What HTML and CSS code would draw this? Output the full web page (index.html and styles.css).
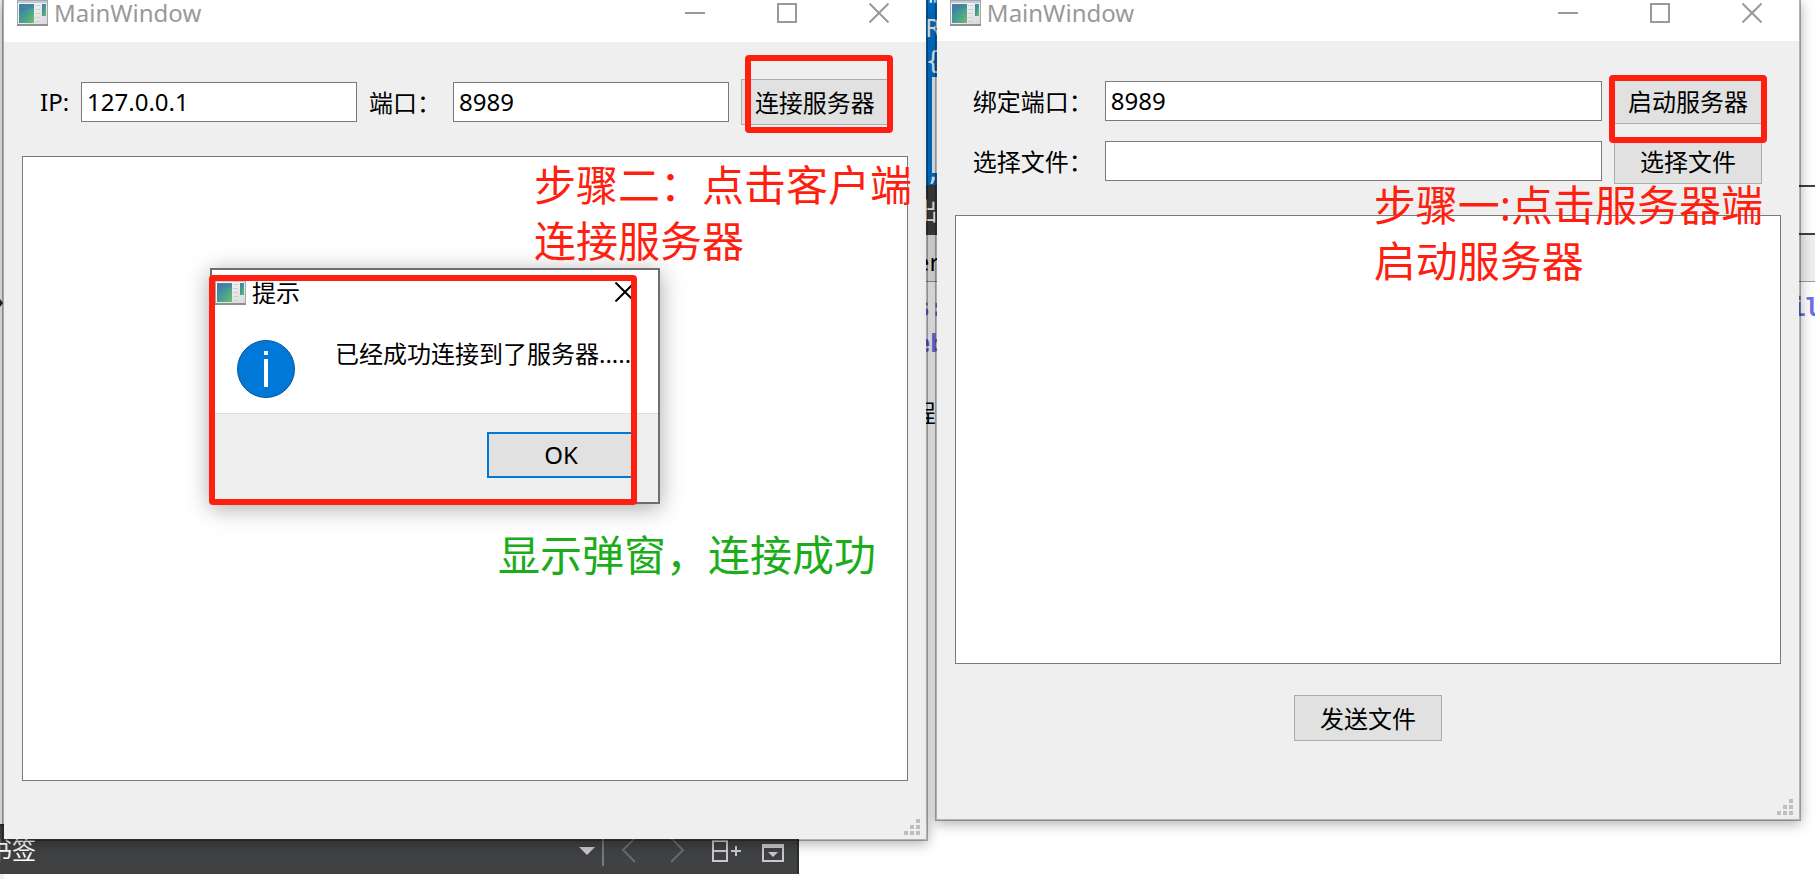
FILE: index.html
```html
<!DOCTYPE html>
<html lang="zh-CN">
<head>
  <meta charset="UTF-8">
  <title>MainWindow</title>
  <link rel="stylesheet" href="styles.css">
</head>
<body>

  <!-- 图标 -->
  <svg class="defs" aria-hidden="true">
    <defs>
      <linearGradient id="panel" x1="0" y1="0" x2="1" y2="1">
        <stop offset="0" stop-color="#3f7fae"/>
        <stop offset="0.5" stop-color="#459a94"/>
        <stop offset="1" stop-color="#6cc067"/>
      </linearGradient>
      <linearGradient id="frame" x1="0" y1="0" x2="1" y2="1">
        <stop offset="0" stop-color="#ffffff"/>
        <stop offset="1" stop-color="#d8d8da"/>
      </linearGradient>
      <symbol id="app" viewBox="0 0 31 26">
        <rect x="0.5" y="0.5" width="30" height="25" fill="url(#frame)" stroke="#a3a7ae"/>
        <path d="M1 1h29v2H1z" fill="#c5cad6"/>
        <path d="M0 25h31" stroke="#8f9094" stroke-width="2"/>
        <rect x="2" y="4" width="15" height="19" fill="url(#panel)"/>
        <path d="M2 14Q7 8 17 8V4H2z" fill="#4478a8" opacity="0.5"/>
        <path d="M18 5.5h5M18 9.5h5M18 13.5h5M18 17.5h5M18 21.5h5" stroke="#cfcfd2"/>
        <rect x="25" y="4" width="4" height="12" fill="url(#panel)"/>
      </symbol>
      <symbol id="min" viewBox="0 0 20 20"><path d="M0 10h20" stroke="currentColor" stroke-width="2"/></symbol>
      <symbol id="max" viewBox="0 0 20 20"><path d="M1 1h18v18H1z" fill="none" stroke="currentColor" stroke-width="2"/></symbol>
      <symbol id="close" viewBox="0 0 20 20"><path d="M0.5 0.5l19 19M19.5 0.5l-19 19" stroke="currentColor" stroke-width="2"/></symbol>
      <symbol id="grip" viewBox="0 0 16 16"><path d="M12 0h4v4h-4zM6 6h4v4H6zM12 6h4v4h-4zM0 12h4v4H0zM6 12h4v4H6zM12 12h4v4h-4z" fill="#bfbfbf"/></symbol>
    </defs>
  </svg>

  <div class="desktop">

    <div class="behind behind-left"><i class="arrow"></i></div>

    <!-- 客户端 -->
    <section class="window client">
      <header class="titlebar">
        <svg class="app-icon"><use href="#app"/></svg>
        <h1>MainWindow</h1>
        <button class="ctl" aria-label="最小化"><svg><use href="#min"/></svg></button>
        <button class="ctl" aria-label="最大化"><svg><use href="#max"/></svg></button>
        <button class="ctl" aria-label="关闭"><svg><use href="#close"/></svg></button>
      </header>

      <div class="body">
        <div class="row">
          <label for="ip">IP:</label>
          <input type="text" id="ip" value="127.0.0.1">
          <label for="port">端口：</label>
          <input type="text" id="port" value="8989">
          <div class="marked">
            <button class="btn">连接服务器</button>
            <span class="mark mark-connect"></span>
          </div>
        </div>
        <textarea aria-label="客户端记录"></textarea>
      </div>
      <svg class="grip"><use href="#grip"/></svg>

      <p class="note note-two">步骤二：点击客户端<br>连接服务器</p>
      <p class="note note-ok">显示弹窗，连接成功</p>

      <!-- 提示弹窗 -->
      <div class="dialog" role="dialog" aria-labelledby="tip">
        <header class="dialog-title">
          <svg class="app-icon"><use href="#app"/></svg>
          <h2 id="tip">提示</h2>
          <button class="dialog-close" aria-label="关闭"><svg><use href="#close"/></svg></button>
        </header>
        <div class="dialog-body">
          <svg class="info" viewBox="0 0 58 58">
            <circle cx="29" cy="29" r="28.5" fill="#0078d7" stroke="#0a5596"/>
            <path d="M27 11h4v4h-4zM27 19h4v28h-4z" fill="#fff"/>
          </svg>
          <p>已经成功连接到了服务器......</p>
        </div>
        <footer class="dialog-foot">
          <button class="btn btn-ok">OK</button>
        </footer>
        <span class="mark mark-dialog"></span>
      </div>
    </section>

    <div class="behind behind-mid" aria-hidden="true">
      <div class="code"><span>"</span><span>R</span><span>{</span><b></b><span>,</span></div>
      <div class="tab">出</div>
      <div class="find">er</div>
      <div class="out"><span>s:</span><span>eb</span></div>
      <div class="cjk">程</div>
    </div>

    <!-- 服务器端 -->
    <section class="window server">
      <header class="titlebar">
        <svg class="app-icon"><use href="#app"/></svg>
        <h1>MainWindow</h1>
        <button class="ctl" aria-label="最小化"><svg><use href="#min"/></svg></button>
        <button class="ctl" aria-label="最大化"><svg><use href="#max"/></svg></button>
        <button class="ctl" aria-label="关闭"><svg><use href="#close"/></svg></button>
      </header>

      <div class="body">
        <div class="row">
          <label for="bind">绑定端口：</label>
          <input type="text" id="bind" value="8989">
          <div class="marked">
            <button class="btn">启动服务器</button>
            <span class="mark mark-start"></span>
          </div>
        </div>
        <div class="row">
          <label for="file">选择文件：</label>
          <input type="text" id="file">
          <button class="btn">选择文件</button>
        </div>
        <textarea aria-label="服务器记录"></textarea>
        <button class="btn btn-send">发送文件</button>
      </div>
      <svg class="grip"><use href="#grip"/></svg>

      <p class="note note-one">步骤一:点击服务器端<br>启动服务器</p>
    </section>

    <div class="behind behind-right" aria-hidden="true">
      <div class="line"></div>
      <div class="find"></div>
      <div class="out"><span>il</span></div>
    </div>

    <!-- 底部书签栏 -->
    <div class="bookmarks">
      <span class="bm-label">书签</span>
      <svg class="bm-tools" viewBox="0 0 210 50">
        <g fill="none">
          <path d="M24 13v29" stroke="#77787a" stroke-width="2"/>
          <path d="M56 14L44 26l12 12M92 14l12 12-12 12" stroke="#6a6b6d" stroke-width="2"/>
          <path d="M134 17h14v20h-14zM134 27h14M152 27h10M157 22v10" stroke="#c8c8cc" stroke-width="2"/>
          <path d="M184 21h20v16h-20z" stroke="#c8c8cc" stroke-width="2"/>
        </g>
        <path d="M0 23h16l-8 8zM183 20h22v4h-22zM189 28h10l-5 5z" fill="#c8c8cc"/>
      </svg>
    </div>
  </div>

</body>
</html>
```

FILE: styles.css
```css
* {
  box-sizing: border-box;
}

body {
  margin: 0;
  background: #fff;
  color: #000;
  font-family: "Noto Sans", "Noto Sans CJK SC", sans-serif;
  font-size: 24px;
  overflow: hidden;
}

h1, h2, p {
  margin: 0;
  font-size: 24px;
  font-weight: 400;
}

button, input, textarea {
  font: inherit;
  color: inherit;
  border-radius: 0;
}

.defs {
  position: absolute;
  width: 0;
  height: 0;
}

.desktop {
  position: relative;
  display: flex;
  height: 100vh;
}

/* windows */
.window {
  position: relative;
  z-index: 2;
  display: flex;
  flex-direction: column;
  min-width: 0;
  background: #efefef;
  background-clip: padding-box;
  border: 2px solid rgba(0, 0, 0, 0.3);
  border-top: none;
  box-shadow: 0 3px 12px rgba(0, 0, 0, 0.3);
}

.client {
  flex: 926 1 0;
  height: calc(100vh - 38px);
}

.server {
  flex: 866 1 0;
  height: calc(100vh - 58px);
}

.titlebar {
  display: flex;
  align-items: center;
  height: 42px;
  padding: 0 1px 16px 13px;
  background: #fff;
  color: #999;
}

.server .titlebar {
  height: 41px;
}

.app-icon {
  width: 31px;
  height: 26px;
  margin-right: 6px;
}

.titlebar h1 {
  flex: 1;
  line-height: 26px;
}

.ctl {
  width: 92px;
  height: 26px;
  padding: 0;
  border: none;
  background: none;
}

.ctl svg, .dialog-close svg {
  display: block;
  width: 20px;
  height: 20px;
  margin: 0 auto;
}

/* forms */
.body {
  flex: 1;
  display: flex;
  flex-direction: column;
  padding: 37px 18px 58px;
}

.row {
  display: flex;
  align-items: center;
  gap: 12px;
  padding: 0 19px 0 18px;
}

.row + .row {
  margin-top: 14px;
}

.row label {
  padding-bottom: 2px;
  white-space: nowrap;
}

.row input {
  flex: 1;
  min-width: 0;
  height: 40px;
  padding: 0 5px 2px;
  border: 1px solid #7a7a7a;
  background: #fff;
}

textarea {
  flex: 1;
  margin-top: 31px;
  border: 1px solid #7a7a7a;
  background: #fff;
  resize: none;
}

.btn {
  width: 148px;
  height: 46px;
  padding: 0 0 2px;
  border: 1px solid #adadad;
  background: #e1e1e1;
}

.server .body {
  padding-bottom: 78px;
}

.btn-send {
  align-self: center;
  margin-top: 31px;
}

.grip {
  position: absolute;
  right: 6px;
  bottom: 4px;
  width: 16px;
  height: 16px;
}

/* red marks and notes */
.marked {
  position: relative;
  display: flex;
}

.mark {
  position: absolute;
  border: 6px solid #ff1f10;
  border-radius: 4px;
}

.mark-connect {
  left: 4px;
  top: -24px;
  width: 148px;
  height: 78px;
}

.mark-start {
  left: -5px;
  top: -3px;
  width: 158px;
  height: 68px;
}

.mark-dialog {
  left: -3px;
  top: 5px;
  width: 428px;
  height: 230px;
}

.note {
  position: absolute;
  z-index: 1;
  color: #ff1f10;
  font-size: 42px;
  line-height: 56px;
  white-space: nowrap;
}

.note-two {
  left: 530px;
  top: 157px;
}

.note-ok {
  left: 494px;
  top: 527px;
  color: #1aad19;
}

.note-one {
  left: 437px;
  top: 177px;
}

/* dialog */
.dialog {
  position: absolute;
  left: 206px;
  top: 268px;
  width: 450px;
  border: 2px solid #6e6e6e;
  background: #fff;
  box-shadow: 0 4px 22px rgba(0, 0, 0, 0.35);
}

.dialog-title {
  display: flex;
  align-items: center;
  height: 44px;
  padding: 0 23px 0 3px;
}

.dialog-title h2 {
  flex: 1;
  padding-bottom: 2px;
}

.dialog-close {
  width: 20px;
  height: 20px;
  padding: 0;
  border: none;
  background: none;
}

.dialog-body {
  display: flex;
  gap: 40px;
  height: 99px;
  padding: 26px 0 0 25px;
}

.dialog-body p {
  line-height: 28px;
  white-space: nowrap;
}

.info {
  flex: none;
  width: 58px;
  height: 58px;
}

.dialog-foot {
  display: flex;
  justify-content: flex-end;
  height: 89px;
  padding: 18px 23px 0 0;
  border-top: 1px solid #dfdfdf;
  background: #efefef;
}

.btn-ok {
  border: 2px solid #0078d7;
}

/* editor seen between the windows */
.behind {
  overflow: hidden;
  font-family: "DejaVu Sans Mono", monospace;
}

.behind-left {
  width: 4px;
  margin-right: -2px;
  background: #efefef;
}

.arrow {
  display: block;
  margin-top: 299px;
  border: 4px solid transparent;
  border-left: 3px solid #222;
}

.behind-mid {
  width: 11px;
  margin: 0 -2px;
}

.behind span {
  display: block;
  height: 36px;
  line-height: 36px;
}

.code {
  height: 185px;
  background: #0078d7;
  color: #fff;
}

.behind .code span {
  height: 32px;
  line-height: 32px;
}

.behind .code span:first-child {
  height: 13px;
  line-height: 13px;
}

.code b {
  display: block;
  height: 96px;
  margin-left: 6px;
  background: #fff;
}

.behind .code span:last-child {
  height: 12px;
  line-height: 0;
}

.tab {
  height: 50px;
  background: #404142;
  color: #fff;
  font-family: "Noto Sans CJK SC", sans-serif;
  line-height: 50px;
  text-indent: -12px;
}

.find {
  height: 47px;
  border-bottom: 1px solid #999;
  background: #efefef;
  font-family: "Noto Sans", sans-serif;
  line-height: 54px;
  text-indent: -10px;
}

.out {
  padding-top: 8px;
  color: #6f6fe6;
  font-weight: 700;
  text-indent: -10px;
}

.cjk {
  margin-top: 32px;
  font-family: "Noto Sans CJK SC", sans-serif;
  line-height: 36px;
  text-indent: -14px;
}

.behind-right {
  width: 16px;
  margin-left: -2px;
}

.line {
  height: 50px;
  margin-top: 185px;
  border: solid #404142;
  border-width: 2px 0;
}

.behind-right .out {
  text-indent: -8px;
}

/* bookmarks bar */
.bookmarks {
  position: absolute;
  z-index: 1;
  left: 0;
  bottom: 5px;
  display: flex;
  justify-content: space-between;
  width: 44%;
  height: 50px;
  padding-right: 8px;
  border-top: 2px solid #2d2d2d;
  border-right: 2px solid #2d2d2d;
  background: #404142;
  color: #fff;
}

.bm-label {
  margin-left: -12px;
  line-height: 48px;
}

.bm-tools {
  width: 210px;
  height: 50px;
  margin-top: -2px;
}
```
